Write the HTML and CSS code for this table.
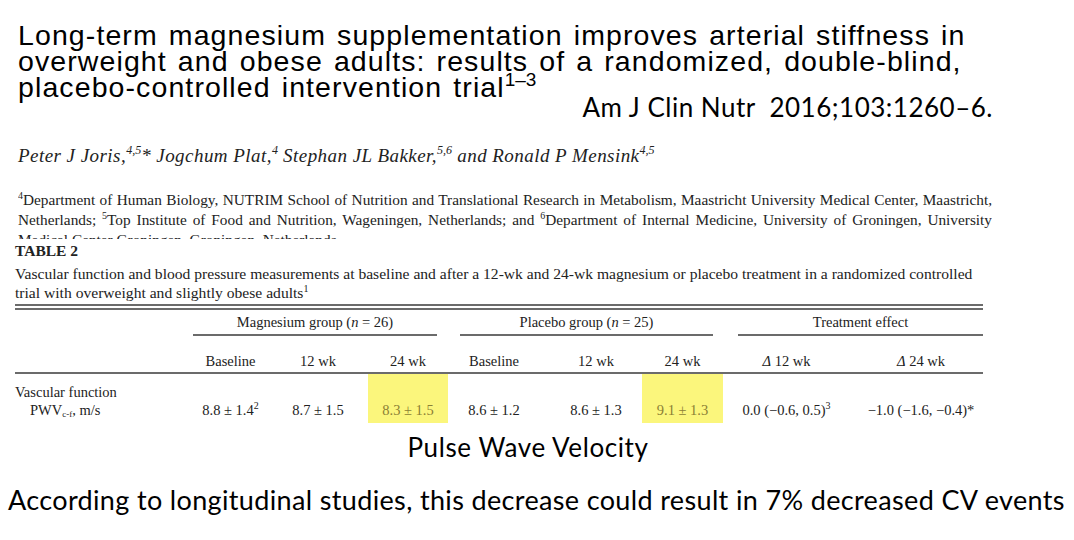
FILE: index.html
```html
<!DOCTYPE html>
<html lang="en">
<head>
<meta charset="utf-8">
<title>Magnesium supplementation and arterial stiffness</title>
<link rel="stylesheet" href="styles.css">
</head>
<body>
<div class="slide">
  <h1 class="title">Long-term magnesium supplementation improves arterial stiffness in<br>overweight and obese adults: results of a randomized, double-blind,<br>placebo-controlled intervention trial<sup class="tsup">1–3</sup><span class="cite">Am J Clin Nutr&nbsp; 2016;103:1260–6.</span></h1>

  <p class="authors">Peter J Joris,<sup>4,5</sup>* Jogchum Plat,<sup>4</sup> Stephan JL Bakker,<sup>5,6</sup> and Ronald P Mensink<sup>4,5</sup></p>

  <div class="affil"><sup>4</sup>Department of Human Biology, NUTRIM School of Nutrition and Translational Research in Metabolism, Maastricht University Medical Center, Maastricht, Netherlands; <sup>5</sup>Top Institute of Food and Nutrition, Wageningen, Netherlands; and <sup>6</sup>Department of Internal Medicine, University of Groningen, University Medical Center Groningen, Groningen, Netherlands</div>

  <div class="table-block">
    <div class="table-label">TABLE 2</div>
    <p class="caption">Vascular function and blood pressure measurements at baseline and after a 12-wk and 24-wk magnesium or placebo treatment in a randomized controlled trial with overweight and slightly obese adults<sup>1</sup></p>
    <div class="double-rule"></div>
    <table class="data">
      <colgroup>
        <col class="w-label"><col class="w-c1"><col class="w-c2"><col class="w-c3"><col class="w-c4"><col class="w-c5"><col class="w-c6"><col class="w-c7"><col class="w-c8">
      </colgroup>
      <tr class="group-row">
        <td></td>
        <td colspan="3"><div class="grp grp-mg">Magnesium group (<i>n</i> = 26)</div></td>
        <td colspan="3"><div class="grp grp-pl">Placebo group (<i>n</i> = 25)</div></td>
        <td colspan="2"><div class="grp grp-tr">Treatment effect</div></td>
      </tr>
      <tr class="head-row">
        <th></th>
        <th>Baseline</th>
        <th>12 wk</th>
        <th>24 wk</th>
        <th>Baseline</th>
        <th class="c5">12 wk</th>
        <th>24 wk</th>
        <th><i>Δ</i> 12 wk</th>
        <th class="c8"><i>Δ</i> 24 wk</th>
      </tr>
      <tr class="row-a">
        <td class="label">Vascular function</td>
        <td></td><td></td><td class="hl"></td><td></td><td></td><td class="hl"></td><td></td><td></td>
      </tr>
      <tr class="row-b">
        <td class="label sub">PWV<sub class="tiny">c-f</sub>, m/s</td>
        <td>8.8 ± 1.4<sup class="num">2</sup></td>
        <td>8.7 ± 1.5</td>
        <td class="hl">8.3 ± 1.5</td>
        <td>8.6 ± 1.2</td>
        <td class="c5">8.6 ± 1.3</td>
        <td class="hl">9.1 ± 1.3</td>
        <td>0.0 (−0.6, 0.5)<sup class="num">3</sup></td>
        <td class="c8">−1.0 (−1.6, −0.4)*</td>
      </tr>
    </table>
  </div>

  <p class="pwv">Pulse Wave Velocity</p>
  <p class="note">According to longitudinal studies, this decrease could result in 7% decreased CV events</p>
</div>
</body>
</html>
```

FILE: styles.css
```css
html, body {
  margin: 0;
  padding: 0;
  background: #ffffff;
}

.slide {
  width: 1074px;
  height: 540px;
  overflow: hidden;
  background: #ffffff;
  color: #000;
}

.title {
  margin: 22px 0 0 18px;
  height: 78px;
  font-family: "Liberation Sans", Arial, sans-serif;
  font-weight: normal;
  font-size: 28.5px;
  line-height: 26px;
  letter-spacing: 1.1px;
  word-spacing: 2px;
  color: #000;
  white-space: nowrap;
}

.tsup {
  font-size: 19px;
  letter-spacing: 0;
  vertical-align: 11px;
  line-height: 0;
}

.cite {
  font-family: Lato, "Open Sans", sans-serif;
  font-size: 26px;
  letter-spacing: 0.5px;
  word-spacing: 0;
  margin-left: 46px;
  vertical-align: -20px;
  line-height: 0;
}

.authors {
  margin: 45px 0 0 18px;
  font-family: "Liberation Serif", "Times New Roman", serif;
  font-style: italic;
  font-size: 19px;
  line-height: 22px;
  letter-spacing: 0.45px;
  color: #222;
}

.authors sup {
  font-size: 12px;
  letter-spacing: 0;
  vertical-align: 8px;
  line-height: 0;
}

.affil {
  margin: 23px 0 0 18px;
  width: 974px;
  height: 49px;
  overflow: hidden;
  font-family: "Liberation Serif", "Times New Roman", serif;
  font-size: 15.3px;
  line-height: 20px;
  text-align: justify;
  color: #222;
}

.affil sup {
  font-size: 10px;
  vertical-align: 6px;
  line-height: 0;
}

.table-block {
  margin: 2px 0 0 15px;
  width: 968px;
  font-family: "Liberation Serif", "Times New Roman", serif;
  color: #222;
}

.table-label {
  font-weight: bold;
  font-size: 15.5px;
  line-height: 20px;
}

.caption {
  margin: 3px 0 0 0;
  width: 980px;
  font-size: 15.6px;
  line-height: 19px;
}

.caption sup {
  font-size: 10px;
  vertical-align: 6px;
  line-height: 0;
}

.double-rule {
  margin-top: 2px;
  height: 2px;
  border-top: 2px solid #6b6b6b;
  border-bottom: 2px solid #6b6b6b;
}

.data {
  width: 968px;
  table-layout: fixed;
  border-collapse: collapse;
  border-spacing: 0;
  font-size: 14.5px;
  line-height: 18px;
}

.w-label { width: 178px; }
.w-c1 { width: 75px; }
.w-c2 { width: 100px; }
.w-c3 { width: 80px; }
.w-c4 { width: 92px; }
.w-c5 { width: 102px; }
.w-c6 { width: 81px; }
.w-c7 { width: 127px; }
.w-c8 { width: 133px; }

.data td, .data th {
  padding: 0;
  text-align: center;
  font-weight: normal;
  white-space: nowrap;
}

.group-row td {
  padding: 0;
}

.grp {
  padding: 3px 0 3px 0;
  border-bottom: 2px solid #6b6b6b;
}

.grp-mg { margin-right: 11px; }
.grp-pl { margin: 0 10px 0 12px; }
.grp-tr { margin-left: 15px; }

.head-row th {
  padding: 16px 0 2px 0;
  border-bottom: 2px solid #6b6b6b;
}

.data .c5 { padding-left: 10px; }
.data .c8 { padding-left: 9px; }

.row-a td {
  padding-top: 9px;
}

.row-b td {
  padding: 0 0 4px 0;
}

.data .label {
  text-align: left;
}

.data .sub {
  padding-left: 15px;
}

.tiny {
  font-size: 9px;
  vertical-align: -2px;
  line-height: 0;
}

.num {
  font-size: 10px;
  vertical-align: 6px;
  line-height: 0;
}

.data .hl {
  background: #fbf67c;
  color: #8b7f35;
}

.pwv {
  margin: 9px 0 0 0;
  padding-right: 18px;
  text-align: center;
  font-family: Lato, "Open Sans", sans-serif;
  font-size: 26px;
  letter-spacing: 0.6px;
  line-height: 30px;
  color: #000;
}

.note {
  margin: 22px 0 0 8px;
  font-family: Lato, "Open Sans", sans-serif;
  font-size: 27px;
  letter-spacing: 0.35px;
  line-height: 32px;
  color: #000;
  white-space: nowrap;
}
```
